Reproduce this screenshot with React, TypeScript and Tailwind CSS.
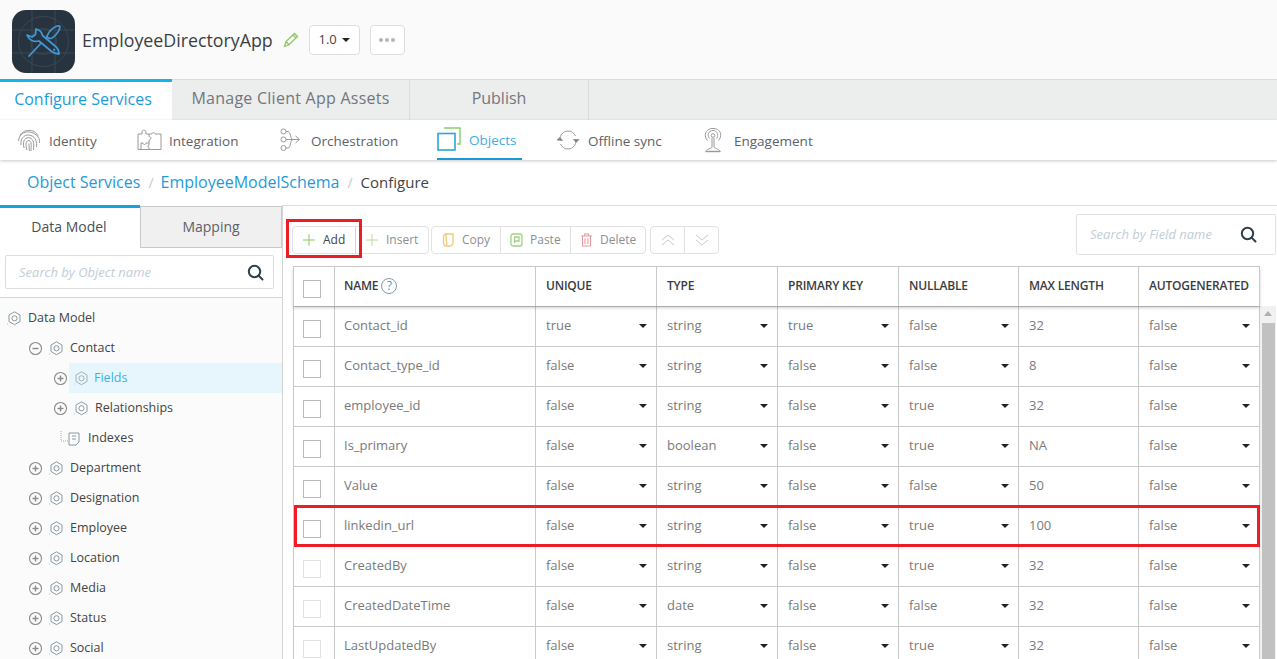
import React from 'react';

const gearIcon = (color = '#8a9aa3') => (
    <svg width="17" height="17" viewBox="0 0 17 17" fill="none" stroke={color} strokeWidth="1">
        <path d="M8.5 1.8 L14 5 V11.5 L8.5 14.7 L3 11.5 V5 Z" />
        <circle cx="8.5" cy="8.3" r="2.6" />
        <path d="M1 14h.6" strokeDasharray="1 1" />
    </svg>
);

const Toggle = ({ open }: { open?: boolean }) => (
    <svg width="15" height="15" viewBox="0 0 15 15" fill="none" stroke="#8a8a8a">
        <circle cx="7.5" cy="7.5" r="6" strokeWidth="1.1" />
        <path d="M4.5 7.5h6" strokeWidth="1.4" />
        {!open && <path d="M7.5 4.5v6" strokeWidth="1.4" />}
    </svg>
);

const SearchIcon = () => (
    <svg width="17" height="17" viewBox="0 0 17 17" fill="none" stroke="#2c3e4a" strokeWidth="2">
        <circle cx="7.5" cy="7.5" r="5.7" />
        <path d="M11.6 11.6 L15.5 15.5" strokeLinecap="round" />
    </svg>
);

const Caret = () => <span className="w-0 h-0 border-x-[4.5px] border-x-transparent border-t-[4.5px] border-t-[#222]" />;

const NavIdentity = () => (
    <svg width="24" height="24" viewBox="0 0 24 24" fill="none" stroke="#9a9a9a" strokeWidth="1">
        <path d="M3 8 C5 1 18 0 21 8" />
        <path d="M1.5 13 C2 5 10 2 16 5 C21 7 23 11 22.5 15" />
        <path d="M4 17 C3 9 9 5.5 14 7.5 C19 9.5 20 14 19.5 19" />
        <path d="M7 20 C5 12 9 8.5 13 10 C17 11.5 17 16 16.5 22" />
        <path d="M10 22 C8 16 9 12.5 12 12.5 C15 13 14 18 14 23" />
        <path d="M12 15.5 C12 18 12 20 12.5 23" />
    </svg>
);
const NavIntegration = () => (
    <svg width="25" height="22" viewBox="0 0 25 22" fill="none" stroke="#9a9a9a" strokeWidth="1">
        <path d="M1 5 H5 V3 C5 0.5 9 0.5 9 3 V5 H12 V7.5 C14.5 7.5 14.5 11 12 11 V14 H9 C9 16 6 16 6 14 H4 V20.5 H1 Z" />
        <path d="M12 5 H15 C15 3 18 3 18 5 H24 V20.5 H4" />
        <path d="M12 14 V16 C10.5 16 10.5 18.5 12 18.5 V20.5" />
    </svg>
);
const NavOrchestration = () => (
    <svg width="21" height="24" viewBox="0 0 21 24" fill="none" stroke="#9a9a9a" strokeWidth="1">
        <circle cx="3.5" cy="3.5" r="2.5" />
        <circle cx="3.5" cy="11.5" r="2.5" />
        <circle cx="3.5" cy="20" r="2.5" />
        <path d="M6 3.5 H8 C11 3.5 10 11.5 13 11.5 M6 11.5 H19 M6 20 H8 C11 20 10 11.5 13 11.5" />
        <path d="M15.5 8 L19.5 11.5 L15.5 15" />
    </svg>
);
const NavObjects = () => (
    <svg width="24" height="24" viewBox="0 0 24 24" fill="none" strokeWidth="1.4">
        <path d="M7 1 H23 V17 H20" stroke="#86d068" />
        <rect x="1" y="6.5" width="17" height="16.5" stroke="#2aa5dc" strokeWidth="1.6" />
    </svg>
);
const NavSync = () => (
    <svg width="24" height="20" viewBox="0 0 24 20" fill="none" stroke="#9a9a9a" strokeWidth="1">
        <path d="M4 8 C5 3 9 1 12 1 C15 1 18 2.5 19.5 6" />
        <path d="M20 12 C19 17 15 19 12 19 C9 19 6 17.5 4.5 14" />
        <path d="M1 10 L4 7.5 L6.5 10.5 Z" fill="#777" />
        <path d="M17.5 9.5 L20 12.5 L23 9.5 Z" fill="#777" />
    </svg>
);
const NavEngagement = () => (
    <svg width="18" height="25" viewBox="0 0 18 25" fill="none" stroke="#9a9a9a" strokeWidth="1">
        <circle cx="9" cy="7.5" r="1.8" />
        <path d="M5.5 10.5 C3.5 8 4 4.5 6.5 3.2 C8 2.4 10 2.4 11.5 3.2 C14 4.5 14.5 8 12.5 10.5" />
        <path d="M3.5 12.5 C0 8.5 1 3.5 4.5 1.5 C7 0 11 0 13.5 1.5 C17 3.5 18 8.5 14.5 12.5" />
        <path d="M8 10 V19 C8 20.5 3 20.5 2 23.5 H16 C15 20.5 10 20.5 10 19 V10" />
        <path d="M1.5 23.5 H16.5" strokeWidth="1.4" />
    </svg>
);

const treeRows = [
    { label: 'Department' },
    { label: 'Designation' },
    { label: 'Employee' },
    { label: 'Location' },
    { label: 'Media' },
    { label: 'Status' },
    { label: 'Social' },
];

const rows = [
    ['Contact_id', 'true', 'string', 'true', 'false', '32', 'false'],
    ['Contact_type_id', 'false', 'string', 'false', 'false', '8', 'false'],
    ['employee_id', 'false', 'string', 'false', 'true', '32', 'false'],
    ['Is_primary', 'false', 'boolean', 'false', 'true', 'NA', 'false'],
    ['Value', 'false', 'string', 'false', 'false', '50', 'false'],
    ['linkedin_url', 'false', 'string', 'false', 'true', '100', 'false'],
    ['CreatedBy', 'false', 'string', 'false', 'true', '32', 'false'],
    ['CreatedDateTime', 'false', 'date', 'false', 'false', '32', 'false'],
    ['LastUpdatedBy', 'false', 'string', 'false', 'true', '32', 'false'],
];

const gridCols = 'grid grid-cols-[40px_201px_121px_121px_121px_120px_120px_121px]';

const App: React.FC = () => {
    return (
        <div className="relative w-[1277px] h-[659px] overflow-hidden bg-white text-[#444]" style={{ fontFamily: '"Open Sans", "Noto Sans", sans-serif' }}>
            {/* app header */}
            <div className="h-[79px] bg-[#fafafa] flex items-center pl-3 pt-[4px]">
                <div className="relative w-[63px] h-[63px] rounded-[14px] bg-[#27343f] overflow-hidden flex items-center justify-center">
                    <svg width="63" height="63" viewBox="0 0 63 63" fill="none" className="absolute inset-0">
                        <g stroke="#3a4854" strokeWidth="1">
                            <circle cx="31.5" cy="31.5" r="25" />
                            <circle cx="31.5" cy="31.5" r="13" />
                            <path d="M20 0V63M43 0V63M0 20H63M0 43H63" />
                        </g>
                        <g stroke="#4396d3" strokeWidth="1.8" strokeLinejoin="round" strokeLinecap="round">
                            <path d="M17 46 L35 27" />
                            <path d="M35 26 C37 20 44 15 47.5 16 C49 18 45 25 40 28 C38 29 35 28 35 26 Z" />
                            <path d="M15 25 L20 27 L23.5 24.5 L24 19 C28 20 30 23 30.5 25.5 L43 36 C45.5 38 47 41 47 44 C44 44 41.5 43 39 41 L27 31 C22 32.5 17 30 15 25 Z" fill="#27343f" />
                            <path d="M42 39.5 L42.5 40" />
                        </g>
                    </svg>
                </div>
                <span className="ml-[7px] text-[17.8px] text-[#3a3f45] -mt-[3px]">EmployeeDirectoryApp</span>
                <svg className="ml-[10px] -mt-[3px]" width="16" height="16" viewBox="0 0 16 16" fill="none" stroke="#8ec760" strokeWidth="1.3">
                    <path d="M1.5 14.5 L3 9.5 L11.5 1.5 L14.5 4.5 L6 12.8 Z M3 9.5 L6 12.8 M10 3 L13 6" />
                </svg>
                <div className="ml-[10px] -mt-[3px] w-[51px] h-[30px] rounded border border-[#ddd] bg-white flex items-center justify-center gap-[5px] text-[13px]">
                    1.0 <Caret />
                </div>
                <div className="ml-[10px] -mt-[3px] w-[35px] h-[30px] rounded border border-[#ddd] bg-white flex items-center justify-center gap-[2px]">
                    <span className="w-1 h-1 rounded-full bg-[#b5b5b5]" />
                    <span className="w-1 h-1 rounded-full bg-[#b5b5b5]" />
                    <span className="w-1 h-1 rounded-full bg-[#b5b5b5]" />
                </div>
            </div>

            {/* main tabs */}
            <div className="h-[41px] flex bg-[#eceded] border-t border-[#dcdcdc]">
                <div className="w-[172px] -mt-px bg-white border-t-[3px] border-[#13b5ea] flex items-center justify-center text-[16px] text-[#1d9bd8] pb-[5px] pr-[6px]">Configure Services</div>
                <div className="w-[238px] border-r border-[#dcdcdc] flex items-center justify-center text-[16px] text-[#72777c] pb-[4px] tracking-[0.25px]">Manage Client App Assets</div>
                <div className="w-[179px] border-r border-[#dcdcdc] flex items-center justify-center text-[16px] text-[#72777c] pb-[4px]">Publish</div>
            </div>

            {/* service nav */}
            <div className="h-[40px] flex bg-white shadow-[0_1px_3px_rgba(0,0,0,0.22)] relative text-[13.5px] text-[#5d6166]">
                <div className="w-[137px] pl-[17px] flex items-center gap-[8px]"><NavIdentity /><span className="mt-[3px]">Identity</span></div>
                <div className="w-[143px] flex items-center gap-[7px]"><NavIntegration /><span className="mt-[3px]">Integration</span></div>
                <div className="w-[157px] flex items-center gap-[10px]"><NavOrchestration /><span className="mt-[3px]">Orchestration</span></div>
                <div className="w-[85px] h-[40px] border-b-2 border-[#1b98d8] flex items-center gap-[8px] text-[#41ade3]"><NavObjects /><span className="mt-[3px]">Objects</span></div>
                <div className="w-[149px] pl-[34px] flex items-center gap-[8px] box-content"><NavSync /><span className="mt-[3px]">Offline sync</span></div>
                <div className="-ml-[1px] flex items-center gap-[12px]"><NavEngagement /><span className="mt-[3px]">Engagement</span></div>
            </div>

            {/* breadcrumb */}
            <div className="h-[45px] pl-[27px] flex items-center text-[16px] text-[#1d9bd8] pb-[1px]">
                <span>Object Services</span>
                <span className="ml-[8px] mr-[7px] text-[#c8c8c8] text-[14px]">/</span>
                <span>EmployeeModelSchema</span>
                <span className="ml-[8px] mr-[8px] text-[#c8c8c8] text-[14px]">/</span>
                <span className="text-[#444] text-[15px] mt-[1px]">Configure</span>
            </div>

            <div className="flex h-[454px]">
                {/* left panel */}
                <div className="w-[283px] shrink-0 bg-[#fbfbfb] border-r border-[#d5d5d5]">
                    <div className="flex h-[43px] bg-white">
                        <div className="w-[140px] border-t-[3px] border-[#0ea5dd] flex items-center justify-center text-[14px] text-[#4a4f55] pb-[3px] pr-[2px]">Data Model</div>
                        <div className="w-[142px] mt-px border border-[#c9c9c9] bg-[#f0f0f0] flex items-center justify-center text-[14px] text-[#5d6166] pb-[2px]">Mapping</div>
                    </div>
                    <div className="h-[50px] bg-white border-b border-[#d5d5d5] px-[5px] pt-[7px]">
                        <div className="h-[34px] w-[269px] border border-[#ddd] rounded-[2px] flex items-center justify-between pl-[13px] pr-[9px]">
                            <span className="italic text-[13px] text-[#c3cdd6] mt-[2px]">Search by Object name</span>
                            <SearchIcon />
                        </div>
                    </div>
                    <div className="pt-[5px] text-[12.5px] text-[#444]">
                        <div className="h-[30px] pl-[6px] flex items-center gap-[5px]">{gearIcon()}Data Model</div>
                        <div className="h-[30px] pl-[28px] flex items-center gap-[5px]"><Toggle open />{gearIcon()}Contact</div>
                        <div className="h-[30px] flex items-center">
                            <div className="w-[69px] pl-[53px] shrink-0"><Toggle /></div>
                            <div className="h-[30px] flex-1 bg-[#e7f5fd] flex items-center gap-[4px] pl-[4px] text-[#38b5e6]">{gearIcon('#9fb2bb')}Fields</div>
                        </div>
                        <div className="h-[30px] pl-[53px] flex items-center gap-[5px]"><Toggle />{gearIcon()}Relationships</div>
                        <div className="h-[30px] pl-[60px] flex items-center gap-[6px]">
                            <svg width="22" height="17" viewBox="0 0 22 17" fill="none" stroke="#8a9aa3" className="-mr-[1px]">
                                <path d="M1 1V11H8" strokeDasharray="1 1" stroke="#aaa" />
                                <path d="M9 3H19V12L16 15H9Z M12 6H16 M12 9H16" />
                            </svg>
                            <span className="ml-[1px]">Indexes</span>
                        </div>
                        {treeRows.map(row => (
                            <div key={row.label} className="h-[30px] pl-[28px] flex items-center gap-[5px]"><Toggle />{gearIcon()}{row.label}</div>
                        ))}
                    </div>
                </div>

                {/* right panel */}
                <div className="flex-1 border-t border-[#dcdcdc] relative">
                    <div className="h-[60px] flex items-start pl-[9px] pr-[1px] pt-[20px] gap-[2px] text-[12px] text-[#8b8f94]">
                        <div className="flex h-[28px] border border-[#e2e2e2] rounded bg-white">
                            <div className="w-[63px] border-r border-[#d5d5d5] flex items-center gap-[8px] pl-[10px] text-[#444]">
                                <svg width="12" height="12" viewBox="0 0 12 12" stroke="#8ec760"><path d="M6 0V12M0 6H12" /></svg>Add
                            </div>
                            <div className="w-[72px] flex items-center gap-[8px] pl-[10px]">
                                <svg width="12" height="12" viewBox="0 0 12 12" stroke="#b4dc94"><path d="M6 0V12M0 6H12" /></svg>Insert
                            </div>
                        </div>
                        <div className="flex h-[28px] border border-[#e2e2e2] rounded bg-white">
                            <div className="w-[69px] border-r border-[#e2e2e2] flex items-center gap-[7px] pl-[10px]">
                                <svg width="13" height="14" viewBox="0 0 13 14" fill="none" stroke="#f2c879" strokeWidth="1.3"><path d="M4 1H11V10C11 12 9 13 7 13H4C2.5 13 1.5 12 1.5 10V4C1.5 2 2.5 1 4 1Z M4 1C4 3 4 8 5 12" /></svg>Copy
                            </div>
                            <div className="w-[70px] border-r border-[#e2e2e2] flex items-center gap-[7px] pl-[9px]">
                                <svg width="13" height="14" viewBox="0 0 13 14" fill="none" stroke="#9fd27c" strokeWidth="1.3"><rect x="1" y="1" width="11" height="12" rx="2" /><path d="M4.5 10V4H9V8H4.5" /></svg>Paste
                            </div>
                            <div className="w-[74px] flex items-center gap-[7px] pl-[9px]">
                                <svg width="13" height="14" viewBox="0 0 13 14" fill="none" stroke="#ea9aa0" strokeWidth="1.1"><path d="M1 3H12M4.5 3V1H8.5V3M2.5 3V13H10.5V3M5 5.5V11M8 5.5V11" /></svg>Delete
                            </div>
                        </div>
                        <div className="flex h-[28px] border border-[#e2e2e2] rounded bg-white ml-[2px]">
                            <div className="w-[34px] border-r border-[#e2e2e2] flex items-center justify-center">
                                <svg width="14" height="12" viewBox="0 0 14 12" fill="none" stroke="#c4cbcf"><path d="M1 6L7 1L13 6M1 11L7 6L13 11" /></svg>
                            </div>
                            <div className="w-[33px] flex items-center justify-center">
                                <svg width="14" height="12" viewBox="0 0 14 12" fill="none" stroke="#c4cbcf"><path d="M1 1L7 6L13 1M1 6L7 11L13 6" /></svg>
                            </div>
                        </div>
                        <div className="ml-auto -mt-[12px] w-[200px] h-[41px] border border-[#e2e2e2] rounded-[2px] flex items-center justify-between pl-[13px] pr-[18px]">
                            <span className="italic text-[13px] text-[#c3cdd6]">Search by Field name</span>
                            <SearchIcon />
                        </div>
                    </div>

                    {/* table */}
                    <div className="pl-[10px] relative">
                        <div className={`${gridCols} w-[967px] h-[40px] border border-b-0 border-[#c9c9c9] bg-white relative z-10 shadow-[0_2px_3px_rgba(0,0,0,0.18)] text-[12px] font-semibold text-[#3c3c3c] tracking-[-0.2px]`}>
                            <div className="flex items-center pl-[9px] pt-[4px]"><span className="w-[18px] h-[18px] border border-[#bbb]" /></div>
                            <div className="border-l border-[#c9c9c9] flex items-center gap-[3px] pl-[9px] pb-[2px]">
                                NAME
                                <span className="w-[16px] h-[16px] rounded-full border border-[#8a9aa3] flex items-center justify-center text-[12px] font-normal text-[#22a7e0]">?</span>
                            </div>
                            {['UNIQUE', 'TYPE', 'PRIMARY KEY', 'NULLABLE', 'MAX LENGTH', 'AUTOGENERATED'].map(h => (
                                <div key={h} className="border-l border-[#c9c9c9] flex items-center pl-[10px] pb-[2px]">{h}</div>
                            ))}
                        </div>
                        {rows.map((row, i) => (
                            <div key={row[0]} className={`${gridCols} w-[967px] h-[40px] border-x border-t border-[#c9c9c9] text-[13px] text-[#7a7a7a]`}>
                                <div className="flex items-center pl-[9px] pt-[4px]">
                                    <span className={`w-[18px] h-[18px] border ${i > 5 ? 'border-[#e2e2e2]' : 'border-[#bbb]'}`} />
                                </div>
                                <div className="border-l border-[#c9c9c9] flex items-center pl-[9px] pb-[2px]">{row[0]}</div>
                                {row.slice(1).map((val, j) => (
                                    <div key={j} className="border-l border-[#c9c9c9] flex items-center justify-between pl-[10px] pr-[9px] pb-[2px]">
                                        {val}
                                        {j !== 4 && <Caret />}
                                        {j === 4 && <span />}
                                    </div>
                                ))}
                            </div>
                        ))}
                        {/* scrollbar */}
                        <div className="absolute left-[977px] top-[40px] bottom-0 w-[16px] h-[360px] flex flex-col items-center bg-[#f1f1f1]">
                            <span className="mt-[5px] w-0 h-0 border-x-[4px] border-x-transparent border-b-[5px] border-b-[#b0b0b0]" />
                            <div className="mt-[7px] w-[13px] flex-1 bg-[#c1c1c1]" />
                        </div>
                    </div>
                </div>
            </div>

            {/* red callouts */}
            <div className="absolute left-[286px] top-[219px] w-[76px] h-[39px] border-[3px] border-[#ee1c25]" />
            <div className="absolute left-[294px] top-[505px] w-[966px] h-[42px] border-[3px] border-[#ee1c25]" />
        </div>
    );
};

export default App;
